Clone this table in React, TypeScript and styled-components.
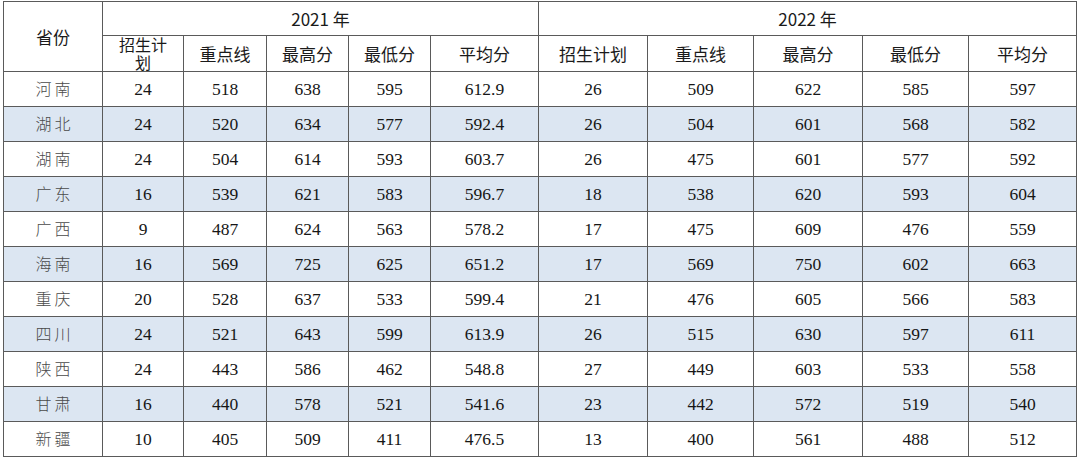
import styled, { createGlobalStyle } from "styled-components";

const GlobalStyle = createGlobalStyle`
  html, body {
    margin: 0;
    padding: 0;
    background: #ffffff;
  }
`;

const columns = [99, 81, 83, 82, 82, 108, 109, 106, 109, 106, 108];

function createRow(province: string, values: string[]) {
  return { province, values };
}

const rows = [
  createRow("河南", ["24", "518", "638", "595", "612.9", "26", "509", "622", "585", "597"]),
  createRow("湖北", ["24", "520", "634", "577", "592.4", "26", "504", "601", "568", "582"]),
  createRow("湖南", ["24", "504", "614", "593", "603.7", "26", "475", "601", "577", "592"]),
  createRow("广东", ["16", "539", "621", "583", "596.7", "18", "538", "620", "593", "604"]),
  createRow("广西", ["9", "487", "624", "563", "578.2", "17", "475", "609", "476", "559"]),
  createRow("海南", ["16", "569", "725", "625", "651.2", "17", "569", "750", "602", "663"]),
  createRow("重庆", ["20", "528", "637", "533", "599.4", "21", "476", "605", "566", "583"]),
  createRow("四川", ["24", "521", "643", "599", "613.9", "26", "515", "630", "597", "611"]),
  createRow("陕西", ["24", "443", "586", "462", "548.8", "27", "449", "603", "533", "558"]),
  createRow("甘肃", ["16", "440", "578", "521", "541.6", "23", "442", "572", "519", "540"]),
  createRow("新疆", ["10", "405", "509", "411", "476.5", "13", "400", "561", "488", "512"]),
];

const subHeads = ["重点线", "最高分", "最低分", "平均分"];

function ScoreTable() {
  return (
    <Page>
      <GlobalStyle />
      <Table>
        <colgroup>
          {columns.map((w, i) => (
            <col key={i} style={{ width: w }} />
          ))}
        </colgroup>
        <thead>
          <tr>
            <HeadCell rowSpan={2} $height={33}>
              省份
            </HeadCell>
            <HeadCell colSpan={5} $height={33}>
              2021 年
            </HeadCell>
            <HeadCell colSpan={5} $height={33}>
              2022 年
            </HeadCell>
          </tr>
          <tr>
            <HeadCell $height={35} $tight>
              招生计
              <br />划
            </HeadCell>
            {subHeads.map((h) => (
              <HeadCell key={"a" + h} $height={35}>
                {h}
              </HeadCell>
            ))}
            <HeadCell $height={35}>招生计划</HeadCell>
            {subHeads.map((h) => (
              <HeadCell key={"b" + h} $height={35}>
                {h}
              </HeadCell>
            ))}
          </tr>
        </thead>
        <tbody>
          {rows.map((row, i) => (
            <DataRow key={row.province} $shaded={i % 2 === 1}>
              <ProvinceCell>{row.province}</ProvinceCell>
              {row.values.map((v, j) => (
                <NumberCell key={j}>{v}</NumberCell>
              ))}
            </DataRow>
          ))}
        </tbody>
      </Table>
    </Page>
  );
}

const Page = styled.div`
  padding: 1px 0 0 3px;
  width: 1080px;
  height: 459px;
  box-sizing: border-box;
  overflow: hidden;
`;

const Table = styled.table`
  border-collapse: collapse;
  table-layout: fixed;
  width: 1073px;

  td,
  th {
    border: 1.5px solid #5a5a5a;
    padding: 0;
    text-align: center;
    vertical-align: middle;
  }
`;

const HeadCell = styled.th<{ $height: number; $tight?: boolean }>`
  height: ${(p) => p.$height}px;
  font-family: "Noto Sans CJK SC", "Noto Sans", sans-serif;
  font-size: ${(p) => (p.$tight ? "16px" : "17px")};
  font-weight: 400;
  color: #1a1a1a;
  line-height: ${(p) => (p.$tight ? "17.5px" : "20px")};
`;

const DataRow = styled.tr<{ $shaded: boolean }>`
  height: 35px;
  background: ${(p) => (p.$shaded ? "#dce6f2" : "#ffffff")};
`;

const ProvinceCell = styled.td`
  font-family: "Noto Sans CJK SC", "Noto Sans", sans-serif;
  font-size: 16px;
  font-weight: 300;
  color: #4a4a4a;
  letter-spacing: 3px;
  padding-left: 3px !important;
  padding-bottom: 2px !important;
`;

const NumberCell = styled.td`
  font-family: "Liberation Serif", "Times New Roman", serif;
  font-size: 17.5px;
  color: #161616;
`;

export default ScoreTable;
